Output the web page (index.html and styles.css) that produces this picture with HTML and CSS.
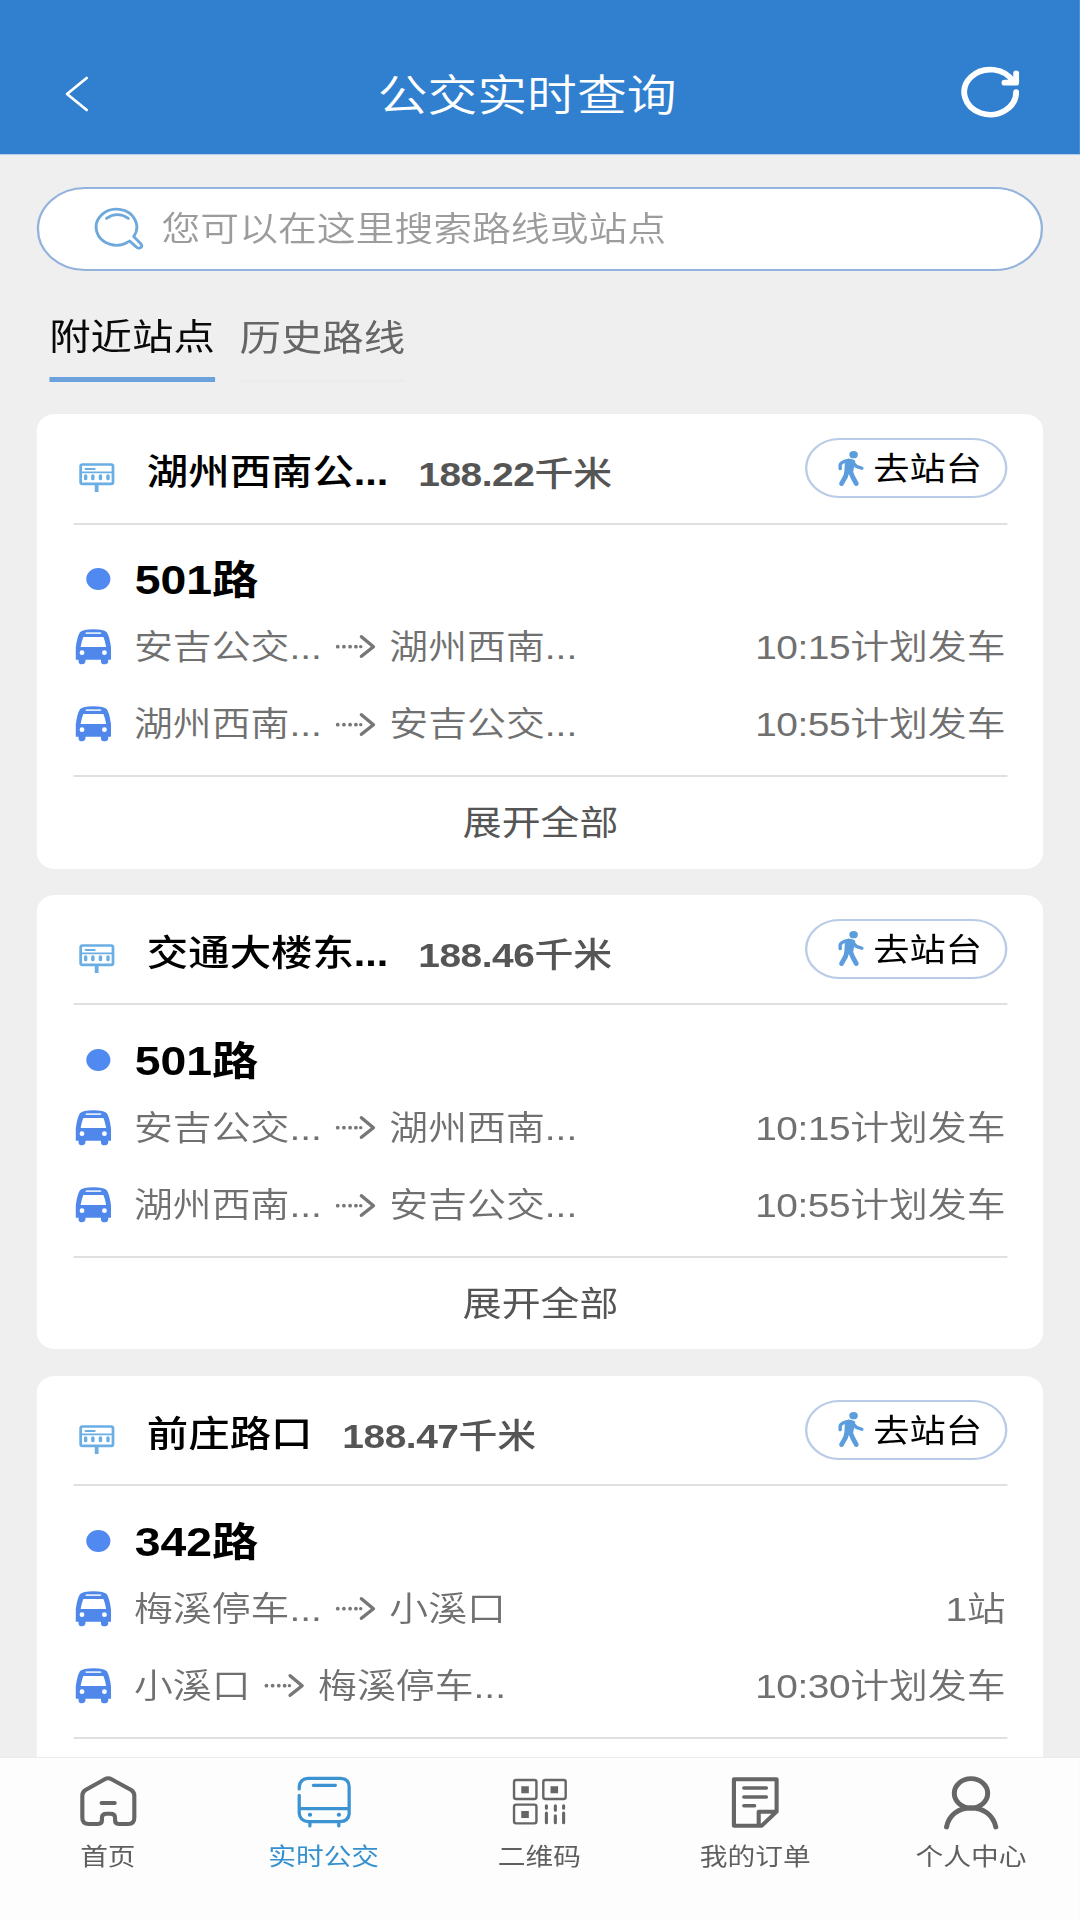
FILE: index.html
```
<!DOCTYPE html>
<html lang="zh-CN">
<head>
<meta charset="utf-8">
<title>公交实时查询</title>
<link rel="stylesheet" href="styles.css">
</head>
<body>
<svg class="sprite" aria-hidden="true">
  <symbol id="station" viewBox="222 185 115 100" preserveAspectRatio="none">
    <g fill="none" stroke="#6aaee4" stroke-linecap="round">
      <rect x="232.500" y="195.500" width="94" height="58" rx="5" stroke-width="8"/>
      <path d="M247 209H273" stroke-width="6.500"/>
      <path d="M236 219H323" stroke-width="5"/>
      <path d="M247 230V238M268 230V238M290 230V238M312 230V238" stroke-width="10"/>
      <path d="M279 257V278" stroke-width="11" stroke-linecap="butt"/>
    </g>
  </symbol>
  <symbol id="walk" viewBox="860 150 86 112" preserveAspectRatio="none">
    <g fill="none" stroke="#5b9ddd" stroke-linecap="round" stroke-linejoin="round">
      <path d="M872 206V195Q873 189 882 185L896 181" stroke-width="10"/>
      <path d="M908 186L919 199L935 205" stroke-width="10"/>
      <path d="M892 215L887 231L876 251" stroke-width="14"/>
      <path d="M901 213L909 232L919 251" stroke-width="14"/>
    </g>
    <ellipse cx="911" cy="164" rx="12.500" ry="11" fill="#5b9ddd"/>
    <path d="M886 180Q902 172 916 182L909 220H884Z" fill="#5b9ddd"/>
  </symbol>
  <symbol id="bus" viewBox="215 686 110 112" preserveAspectRatio="none">
    <path d="M230 699Q238 690 269 690Q300 690 308 699Q316 712 320 744V781H312V787Q310 795 301 795Q292 795 291 787V781H246V787Q244 795 236 795Q227 795 226 787V781H218V744Q222 712 230 699Z" fill="#4f88ea"/>
    <path d="M240 713H298Q303 724 306 743H232Q235 724 240 713Z" fill="#fff"/>
    <rect x="246" y="699" width="46" height="5" rx="2.500" fill="#dfeafc"/>
    <circle cx="236" cy="760" r="7" fill="#fff"/>
    <circle cx="301" cy="760" r="7" fill="#fff"/>
  </symbol>
  <symbol id="arrow" viewBox="972 705 124 75" preserveAspectRatio="none">
    <g fill="#777"><circle cx="981" cy="743" r="5.500"/><circle cx="999" cy="743" r="5.500"/><circle cx="1017" cy="743" r="5.500"/><circle cx="1034" cy="743" r="5.500"/><circle cx="1048" cy="743" r="5"/></g>
    <path d="M1050 713L1085 743L1050 772" fill="none" stroke="#777" stroke-width="10" stroke-linecap="round" stroke-linejoin="round"/>
  </symbol>
</svg>
<div class="app">
  <header class="header">
    <svg class="back" viewBox="185 222 78 120" preserveAspectRatio="none"><path d="M253 234L196 282L253 330"/></svg>
    <h1 class="title">公交实时查询</h1>
    <svg class="refresh" viewBox="1216 195 184 165" preserveAspectRatio="none"><path d="M1382 276A75.500 67.500 0 1 1 1374 246M1382 220V248H1348"/></svg>
  </header>

  <main class="main">
    <div class="search">
      <svg class="search-icon" viewBox="270 618 152 136" preserveAspectRatio="none"><path d="M373 725A59 54 0 1 1 388 710L407 730Q415 739 408 743Q400 747 394 740L376 723M309 655Q340 633 372 655"/></svg>
      <span class="placeholder">您可以在这里搜索路线或站点</span>
    </div>
    <nav class="tabs">
      <a class="tab active">附近站点</a>
      <a class="tab">历史路线</a>
    </nav>

    <section class="card">
      <div class="card-head">
        <svg class="station"><use href="#station"/></svg>
        <span class="name">湖州西南公<b>...</b></span>
        <span class="distance"><b class="num">188.22</b>千米</span>
        <span class="go"><svg class="walk"><use href="#walk"/></svg><span>去站台</span></span>
      </div>
      <div class="card-body">
        <div class="line"><i class="dot"></i>501路</div>
        <div class="trip"><svg class="bus"><use href="#bus"/></svg><span>安吉公交...</span><svg class="arrow"><use href="#arrow"/></svg><span>湖州西南...</span><span class="status"><span class="num">10:15</span>计划发车</span></div>
        <div class="trip"><svg class="bus"><use href="#bus"/></svg><span>湖州西南...</span><svg class="arrow"><use href="#arrow"/></svg><span>安吉公交...</span><span class="status"><span class="num">10:55</span>计划发车</span></div>
      </div>
      <div class="more">展开全部</div>
    </section>

    <section class="card">
      <div class="card-head">
        <svg class="station"><use href="#station"/></svg>
        <span class="name">交通大楼东<b>...</b></span>
        <span class="distance"><b class="num">188.46</b>千米</span>
        <span class="go"><svg class="walk"><use href="#walk"/></svg><span>去站台</span></span>
      </div>
      <div class="card-body">
        <div class="line"><i class="dot"></i>501路</div>
        <div class="trip"><svg class="bus"><use href="#bus"/></svg><span>安吉公交...</span><svg class="arrow"><use href="#arrow"/></svg><span>湖州西南...</span><span class="status"><span class="num">10:15</span>计划发车</span></div>
        <div class="trip"><svg class="bus"><use href="#bus"/></svg><span>湖州西南...</span><svg class="arrow"><use href="#arrow"/></svg><span>安吉公交...</span><span class="status"><span class="num">10:55</span>计划发车</span></div>
      </div>
      <div class="more">展开全部</div>
    </section>

    <section class="card">
      <div class="card-head">
        <svg class="station"><use href="#station"/></svg>
        <span class="name">前庄路口</span>
        <span class="distance"><b class="num">188.47</b>千米</span>
        <span class="go"><svg class="walk"><use href="#walk"/></svg><span>去站台</span></span>
      </div>
      <div class="card-body">
        <div class="line"><i class="dot"></i>342路</div>
        <div class="trip"><svg class="bus"><use href="#bus"/></svg><span>梅溪停车...</span><svg class="arrow"><use href="#arrow"/></svg><span>小溪口</span><span class="status"><span class="num">1</span>站</span></div>
        <div class="trip"><svg class="bus"><use href="#bus"/></svg><span>小溪口</span><svg class="arrow"><use href="#arrow"/></svg><span>梅溪停车...</span><span class="status"><span class="num">10:30</span>计划发车</span></div>
      </div>
    </section>
  </main>

  <nav class="tabbar">
    <a class="tab-item">
      <svg class="nav-home" viewBox="225 108 175 160" preserveAspectRatio="none"><path stroke-width="12" d="M237 170Q237 159 246 153L302 121Q312 115 322 121L379 153Q388 159 388 170V236Q388 255 370 255H343Q332 255 332 243V236Q332 224 318 224H308Q294 224 294 236V243Q294 255 282 255H256Q237 255 237 236ZM293 192H331"/></svg>
      <span>首页</span>
    </a>
    <a class="tab-item current">
      <svg class="nav-bus" viewBox="850 105 172 162" preserveAspectRatio="none"><path stroke-width="9.500" d="M864 147V141Q866 116 890 115H984Q1009 116 1009 140V222Q1007 244 982 245H890Q866 243 864 220V166M866 206H1008M905 136H969M895 248V258M979 248V258"/><path stroke-width="12" d="M895 224H895.500M979 224H979.500"/></svg>
      <span>实时公交</span>
    </a>
    <a class="tab-item">
      <svg class="nav-qr" viewBox="1482 110 170 150" preserveAspectRatio="none"><g stroke-width="7"><rect x="1492" y="119" width="65" height="57" rx="6"/><rect x="1492" y="193" width="65" height="56" rx="6"/><rect x="1577" y="119" width="65" height="57" rx="6"/></g><path stroke="none" fill="#666" d="M1513 138h22v21h-22zM1513 212h22v21h-22zM1598 138h22v21h-22z"/><path stroke-width="9" d="M1586 196V204M1586 218V247M1612 196V210M1612 226V247M1636 196V204M1636 218V247"/></svg>
      <span>二维码</span>
    </a>
    <a class="tab-item">
      <svg class="nav-order" viewBox="548 104 152 164" preserveAspectRatio="none"><path stroke-width="12" d="M562 117H686V214L643 256H562ZM634 254V214H684"/><path stroke-width="10.500" d="M591 143H656M591 170H656M591 196H622"/></svg>
      <span>我的订单</span>
    </a>
    <a class="tab-item">
      <svg class="nav-user" viewBox="1162 100 176 172" preserveAspectRatio="none"><ellipse cx="1250" cy="158" rx="48.500" ry="44" stroke-width="14.500"/><path stroke-width="14.500" d="M1179 259C1186 222 1214 202 1250 202S1314 222 1322 259"/></svg>
      <span>个人中心</span>
    </a>
  </nav>
</div>
</body>
</html>
```
FILE: styles.css
```
* {
  box-sizing: border-box;
}

body {
  margin: 0;
  background: #efefef;
  overflow: hidden;
  width: 1080px;
  height: 1920px;
}

.sprite {
  display: none;
}

svg {
  display: block;
  flex: none;
}

/* The interface is laid out narrow and widened to fill the display. */
.app {
  width: 939.13px;
  height: 1920px;
  display: flex;
  flex-direction: column;
  transform: scaleX(1.15);
  transform-origin: 0 0;
  font-family: "Liberation Sans", "Noto Sans CJK SC", sans-serif;
  color: #707070;
}

.header {
  flex: none;
  height: 155px;
  padding: 33px 49.800px 0 55px;
  display: flex;
  align-items: center;
  justify-content: space-between;
  background: #317fcf;
  border-bottom: 1px solid #b5cfec;
}

.header svg {
  fill: none;
  stroke: #fff;
  stroke-linecap: round;
  stroke-linejoin: round;
}

.back {
  width: 23.400px;
  height: 40px;
  stroke-width: 8;
}

.title {
  margin: 4px 0 0 4px;
  font-size: 43.300px;
  line-height: 60px;
  font-weight: 350;
  color: #fff;
}

.refresh {
  width: 55px;
  height: 55px;
  margin-top: -3px;
  stroke-width: 17;
}

.main {
  flex: 1;
  min-height: 0;
  overflow: hidden;
  padding: 31.500px 32px 0;
}

.search {
  height: 84px;
  display: flex;
  align-items: center;
  gap: 14.300px;
  padding-left: 46.700px;
  background: #fff;
  border: 2px solid #94b3dc;
  border-radius: 42px;
}

.search-icon {
  width: 45.500px;
  height: 45.300px;
  fill: none;
  stroke: #6fa9dc;
  stroke-width: 8.500;
  stroke-linecap: round;
  stroke-linejoin: round;
}

.placeholder {
  font-size: 33.750px;
  line-height: 60px;
  font-weight: 350;
  color: #9c9c9c;
}

.tabs {
  display: flex;
  gap: 21.500px;
  padding: 34px 0 0 10.800px;
  height: 143.500px;
}

.tab {
  height: 77px;
  font-size: 36px;
  line-height: 67px;
  color: #666;
  border-bottom: 2px solid #ebebeb;
}

.tab.active {
  line-height: 65px;
  color: #0a0a0a;
  border-bottom: 5px solid #6ba2dd;
}

.card {
  height: 454.500px;
  margin-bottom: 26.400px;
  padding: 0 31px 0 32px;
  background: #fff;
  border-radius: 16px;
}

.card-head {
  height: 110.500px;
  display: flex;
  align-items: center;
  padding: 6px 0 0 2.800px;
  border-bottom: 2px solid #e0e0e0;
}

.station {
  width: 34.400px;
  height: 33.300px;
  margin: 13px 0 0 0;
}

.name {
  margin: 3px 0 0 26.500px;
  font-size: 36px;
  line-height: 50px;
  font-weight: 500;
  color: #000;
}

.distance {
  margin: 6px 0 0 26px;
  font-size: 33.800px;
  line-height: 50px;
  font-weight: 500;
  color: #555;
}

.num {
  letter-spacing: -0.400px;
}

.go {
  width: 176px;
  height: 60px;
  margin: -6px 0 0 auto;
  padding-left: 25px;
  display: flex;
  align-items: center;
  gap: 6.500px;
  border: 2px solid #b9cbe6;
  border-radius: 30px;
  font-size: 31.500px;
  line-height: 40px;
  color: #000;
}

.go span {
  margin-top: 1px;
}

.walk {
  width: 25.700px;
  height: 37.300px;
}

.card-body {
  height: 252.500px;
  padding-top: 17px;
  border-bottom: 2px solid #e0e0e0;
}

.line {
  height: 66.700px;
  display: flex;
  align-items: center;
  font-size: 40.300px;
  line-height: 48px;
  padding-top: 12px;
  font-weight: 700;
  color: #000;
}

.dot {
  width: 21px;
  height: 22px;
  margin: -3px 21.500px 0 10.700px;
  border-radius: 50%;
  background: #5089ef;
}

.trip {
  height: 77.300px;
  display: flex;
  align-items: center;
  font-size: 33.800px;
  line-height: 42px;
  font-weight: 350;
}

.bus {
  width: 33px;
  height: 37.300px;
  margin: 0 19px 0 0.500px;
}

.arrow {
  width: 37px;
  height: 25px;
  margin: 0 10.500px 0 11.200px;
}

.status {
  margin-left: auto;
  padding-right: 1.700px;
}

.more {
  line-height: 92px;
  text-align: center;
  font-size: 33.800px;
  color: #555;
}

.tabbar {
  flex: none;
  height: 163.500px;
  display: flex;
  padding-right: 1px;
  background: #fdfdfd;
  border-top: 1px solid #ebebeb;
}

.tab-item {
  flex: 1;
  display: flex;
  flex-direction: column;
  align-items: center;
  justify-content: space-between;
  height: 117px;
  padding-top: 17.500px;
  font-size: 24.100px;
  line-height: 36px;
  color: #5f5f5f;
}

.tab-item svg {
  fill: none;
  stroke: #666;
  stroke-linejoin: round;
  stroke-linecap: round;
}

.tab-item.current {
  color: #3590d0;
}

.tab-item.current svg {
  stroke: #3b93d1;
}

.nav-home {
  width: 52.400px;
  height: 53.300px;
}

.nav-bus {
  width: 51.500px;
  height: 54px;
}

.nav-qr {
  width: 50.900px;
  height: 50px;
  margin-top: 2px;
}

.nav-order {
  width: 45.500px;
  height: 54.700px;
}

.nav-user {
  width: 52.700px;
  height: 57.300px;
  margin-top: -1.500px;
}
```
